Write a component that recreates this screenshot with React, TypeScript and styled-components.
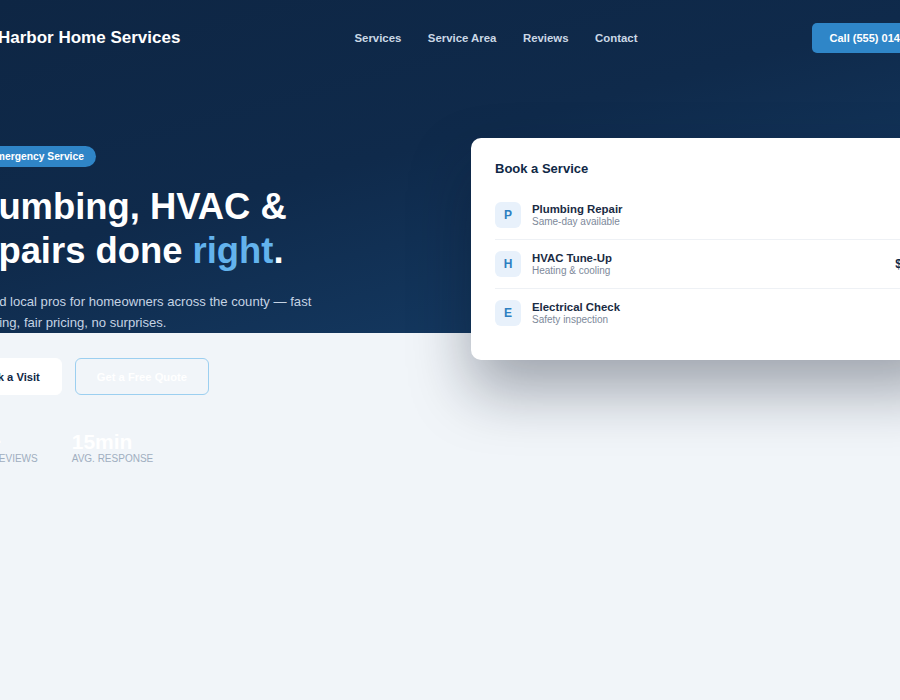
import styled, { createGlobalStyle } from 'styled-components'

const GlobalStyle = createGlobalStyle`
  html, body {
    margin: 0;
    padding: 0;
    background: #f1f5f9;
  }
  body {
    font-family: 'Liberation Sans', Arial, sans-serif;
  }
  * {
    box-sizing: border-box;
  }
`

const services = [
  { letter: 'P', name: 'Plumbing Repair', note: 'Same-day available', price: '$89' },
  { letter: 'H', name: 'HVAC Tune-Up', note: 'Heating & cooling', price: '$129' },
  { letter: 'E', name: 'Electrical Check', note: 'Safety inspection', price: '$99' }
]

const stats = [
  { value: '850+', label: '5-Star Reviews' },
  { value: '15min', label: 'Avg. Response' }
]

const App = () => {
  return (
    <Page>
      <GlobalStyle />
      <Hero>
        <Inner>
          <Header>
            <Logo>
              <LogoMark>
                <svg width='18' height='18' viewBox='0 0 24 24' fill='none' stroke='#fff' strokeWidth='2.2' strokeLinecap='round' strokeLinejoin='round'>
                  <path d='M3 11l9-7 9 7' />
                  <path d='M5 10v10h14V10' />
                </svg>
              </LogoMark>
              Harbor Home Services
            </Logo>
            <Nav>
              <NavLink>Services</NavLink>
              <NavLink>Service Area</NavLink>
              <NavLink>Reviews</NavLink>
              <NavLink>Contact</NavLink>
            </Nav>
            <CallButton>Call (555) 014-2290</CallButton>
          </Header>

          <HeroGrid>
            <Intro>
              <Badge>24/7 Emergency Service</Badge>
              <Title>
                Plumbing, HVAC &amp;
                <br />
                repairs done <Accent>right</Accent>.
              </Title>
              <Lead>
                Licensed local pros for homeowners across the county — fast
                scheduling, fair pricing, no surprises.
              </Lead>
              <Actions>
                <ActionButton $solid>Book a Visit</ActionButton>
                <ActionButton>Get a Free Quote</ActionButton>
              </Actions>
              <Stats>
                {stats.map((s) => (
                  <Stat key={s.label}>
                    <StatValue>{s.value}</StatValue>
                    <StatLabel>{s.label}</StatLabel>
                  </Stat>
                ))}
              </Stats>
            </Intro>

            <Card>
              <CardTitle>Book a Service</CardTitle>
              {services.map((s) => (
                <ServiceRow key={s.name}>
                  <ServiceIcon>{s.letter}</ServiceIcon>
                  <ServiceText>
                    <ServiceName>{s.name}</ServiceName>
                    <ServiceNote>{s.note}</ServiceNote>
                  </ServiceText>
                  <Price>{s.price}</Price>
                </ServiceRow>
              ))}
            </Card>
          </HeroGrid>
        </Inner>
      </Hero>
    </Page>
  )
}

export default App

const Page = styled.div`
  min-height: 100vh;
  overflow: hidden;
  background: #f1f5f9;
`

const Hero = styled.section`
  height: 333px;
  display: flex;
  flex-direction: column;
  align-items: center;
  background: linear-gradient(165deg, #0e2644 0%, #0f2a4b 45%, #163f6a 100%);
`

const Inner = styled.div`
  width: 992px;
  flex-shrink: 0;
`

const Header = styled.header`
  height: 75px;
  display: flex;
  align-items: center;
  justify-content: space-between;
`

const Logo = styled.div`
  display: flex;
  align-items: center;
  gap: 10px;
  color: #ffffff;
  font-size: 17px;
  font-weight: 700;
`

const LogoMark = styled.span`
  width: 34px;
  height: 34px;
  border-radius: 8px;
  background: #2f85c7;
  display: flex;
  align-items: center;
  justify-content: center;
`

const Nav = styled.nav`
  display: flex;
  gap: 26.5px;
`

const NavLink = styled.a`
  color: #cbd8e6;
  font-size: 11.4px;
  font-weight: 700;
  cursor: pointer;
`

const CallButton = styled.button`
  height: 30px;
  padding: 0 18px;
  border: none;
  border-radius: 5px;
  background: #2f86c8;
  color: #ffffff;
  font-family: inherit;
  font-size: 11px;
  font-weight: 700;
  white-space: nowrap;
`

const HeroGrid = styled.div`
  display: grid;
  grid-template-columns: 1fr 475px;
  gap: 40px;
  align-items: start;
  padding-top: 63px;
`

const Intro = styled.div`
  padding-top: 8px;
  display: flex;
  flex-direction: column;
  align-items: flex-start;
`

const Badge = styled.span`
  height: 21px;
  line-height: 21px;
  padding: 0 12px;
  border-radius: 999px;
  background: #2f85c7;
  color: #ffffff;
  font-size: 10.3px;
  font-weight: 700;
`

const Title = styled.h1`
  margin: 18px 0 0;
  padding-left: 10px;
  color: #ffffff;
  font-size: 36.4px;
  line-height: 44px;
  font-weight: 700;
`

const Accent = styled.span`
  color: #63b3ed;
`

const Lead = styled.p`
  margin: 17.5px 0 0;
  max-width: 370px;
  color: #c5d3e3;
  font-size: 13.1px;
  line-height: 21px;
`

const Actions = styled.div`
  display: flex;
  gap: 13px;
  margin-top: 25.5px;
`

const ActionButton = styled.button<{ $solid?: boolean }>`
  height: 37px;
  padding: 0 21px;
  border-radius: 6px;
  font-family: inherit;
  font-size: 11.2px;
  font-weight: 700;
  border: 1.5px solid ${(p) => (p.$solid ? '#ffffff' : '#9ccff0')};
  background: ${(p) => (p.$solid ? '#ffffff' : 'transparent')};
  color: ${(p) => (p.$solid ? '#0f2846' : '#ffffff')};
`

const Stats = styled.div`
  display: flex;
  gap: 34px;
  margin-top: 35.5px;
`

const Stat = styled.div`
  display: flex;
  flex-direction: column;
`

const StatValue = styled.span`
  color: #ffffff;
  font-size: 21px;
  line-height: 21px;
  font-weight: 700;
`

const StatLabel = styled.span`
  color: #a0aec0;
  font-size: 10px;
  line-height: 14px;
  text-transform: uppercase;
`

const Card = styled.div`
  background: #ffffff;
  border-radius: 10px;
  padding: 23px 24px 23px;
  box-shadow: 0 30px 60px rgba(10, 20, 40, 0.36);
`

const CardTitle = styled.h2`
  margin: 0 0 14px;
  color: #0f2846;
  font-size: 13px;
  line-height: 16px;
  font-weight: 700;
`

const ServiceRow = styled.div`
  display: flex;
  align-items: center;
  gap: 11px;
  padding: 11px 0;
  border-bottom: 1px solid #eef1f5;

  &:last-child {
    border-bottom: none;
  }
`

const ServiceIcon = styled.span`
  width: 26px;
  height: 26px;
  flex-shrink: 0;
  border-radius: 6px;
  background: #e8f1fb;
  color: #2d7fc1;
  font-size: 12px;
  font-weight: 700;
  display: flex;
  align-items: center;
  justify-content: center;
`

const ServiceText = styled.div`
  flex: 1;
  display: flex;
  flex-direction: column;
`

const ServiceName = styled.span`
  color: #1a2b44;
  font-size: 11.4px;
  line-height: 13px;
  font-weight: 700;
`

const ServiceNote = styled.span`
  color: #7d899a;
  font-size: 10px;
  line-height: 12px;
`

const Price = styled.span`
  color: #0f2846;
  font-size: 12px;
  font-weight: 700;
`
